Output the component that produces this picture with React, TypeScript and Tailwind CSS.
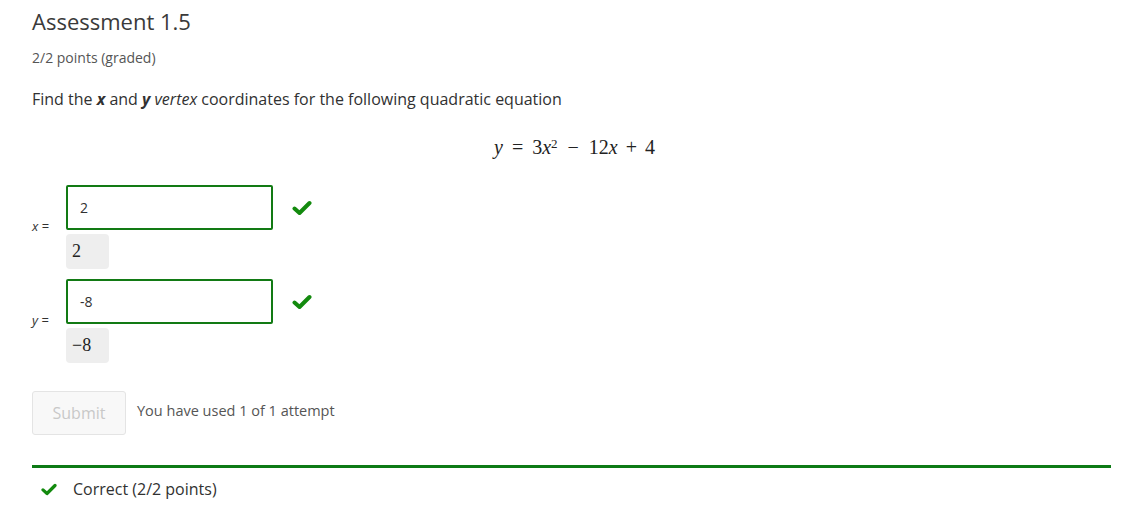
import React from "react";

const sans = { fontFamily: '"Open Sans", "Liberation Sans", sans-serif' };
const serif = { fontFamily: '"Liberation Serif", "DejaVu Serif", serif' };

const Check = ({ className }: { className: string }) => (
  <svg viewBox="0 0 20 16" className={className} fill="none">
    <path d="M2.5 8.5 L7.5 13 L17.5 3" stroke="currentColor" strokeWidth="4" strokeLinecap="round" strokeLinejoin="round" />
  </svg>
);

const Answer = ({ label, value, preview }: { label: string; value: string; preview: string }) => {
  return (
    <div className="flex items-center">
      <span className="w-[34px] text-[13px] text-[#313131]">
        <i>{label}</i> =
      </span>
      <div className="flex flex-col gap-[4px]">
        <div className="flex items-center">
          <div className="w-[207px] h-[45px] border-2 border-[#127a14] rounded-[2px] flex items-center pl-[12px] text-[14px] text-[#313131]">
            {value}
          </div>
          <Check className="ml-[19px] w-[20px] h-[16px] text-[#138a0e]" />
        </div>
        <div
          className="w-[43px] h-[35px] bg-[#eeeeee] rounded-[4px] flex items-center pl-[6px] text-[18px] text-[#222]"
          style={serif}
        >
          {preview}
        </div>
      </div>
    </div>
  );
};

const App = () => {
  return (
    <div className="bg-white w-[1136px] h-[505px] pl-[32px] pr-[25px] pt-[6px]" style={sans}>
      <h2 className="text-[22px] leading-[30px] text-[#3a3a3a]">Assessment 1.5</h2>
      <div className="mt-[13px] text-[14px] leading-[18px] text-[#555]">2/2 points (graded)</div>
      <p className="mt-[21px] text-[16px] leading-[22px] text-[#313131]">
        Find the <b className="italic">x</b> and <b className="italic">y</b> <i>vertex</i> coordinates for the following
        quadratic equation
      </p>
      <div className="mt-[24px] flex justify-center pl-[6px] text-[20px] leading-[26px] text-[#222]" style={serif}>
        <i>y</i>
        <span className="mx-[9px]">=</span>
        <span>
          3<i>x</i>
          <sup className="text-[13px]">2</sup>
        </span>
        <span className="mx-[10px]">−</span>
        <span>
          12<i>x</i>
        </span>
        <span className="mx-[8px]">+</span>
        <span>4</span>
      </div>
      <div className="mt-[25px] flex flex-col gap-[10px]">
        <Answer label="x" value="2" preview="2" />
        <Answer label="y" value="-8" preview="−8" />
      </div>
      <div className="mt-[28px] flex items-center">
        <button className="w-[94px] h-[44px] border border-[#e4e4e4] bg-[#f8f8f8] rounded-[3px] text-[16px] text-[#c8c8c8]">
          Submit
        </button>
        <span className="ml-[11px] -mt-[4px] text-[14.5px] text-[#555]">You have used 1 of 1 attempt</span>
      </div>
      <div className="mt-[30px] h-[3px] bg-[#0d7a15]" />
      <div className="mt-[9px] flex items-center">
        <Check className="ml-[9px] w-[16px] h-[13px] text-[#138a0e]" />
        <span className="ml-[16px] text-[16px] text-[#313131]">Correct (2/2 points)</span>
      </div>
    </div>
  );
};

export default App;
